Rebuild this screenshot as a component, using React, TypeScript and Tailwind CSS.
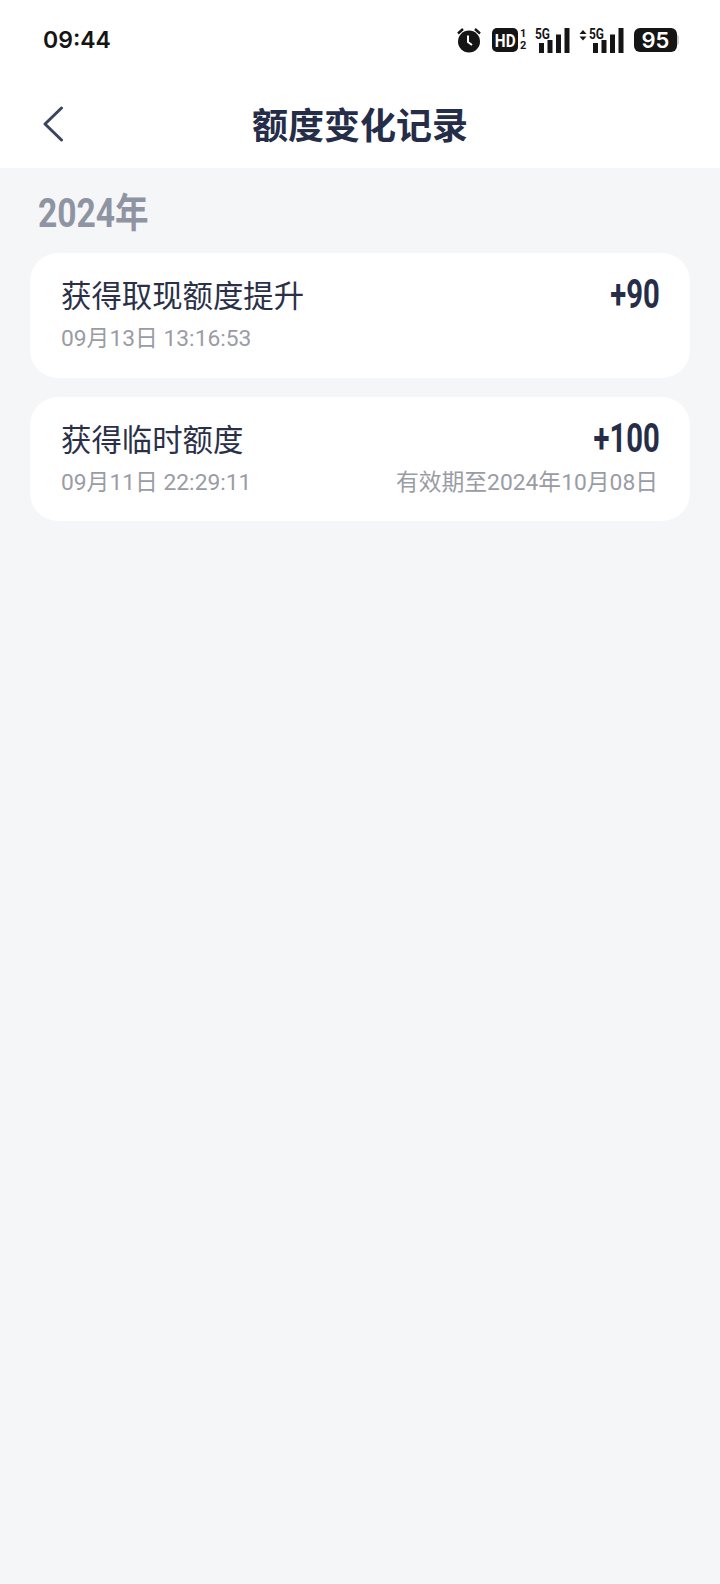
const CJK = 'font-["Roboto","Noto_Sans_CJK_SC",sans-serif]';

const records = [
  { id: 1, title: '获得取现额度提升', time: '09月13日 13:16:53', amount: '+90', note: '' },
  { id: 2, title: '获得临时额度', time: '09月11日 22:29:11', amount: '+100', note: '有效期至2024年10月08日' },
];

function Alarm() {
  return (
    <svg width="24" height="26" viewBox="0 0 24 26" className="shrink-0">
      <circle cx="12" cy="14.5" r="11" fill="#151515" />
      <path d="M11 8.5v6.5l4 3" fill="none" stroke="#fff" strokeWidth="2" />
      <path d="M1 6.5 6 2M23 6.5 18 2" fill="none" stroke="#151515" strokeWidth="2.4" />
    </svg>
  );
}

function Signal({ arrows }: { arrows?: boolean }) {
  return (
    <svg width={arrows ? 45 : 36} height="26" viewBox={arrows ? '0 0 45 26' : '0 0 36 26'} className="shrink-0">
      {arrows && <path d="M0.5 7 4 3 7.5 7ZM0.5 9.5 4 13.5 7.5 9.5Z" fill="#151515" />}
      <g transform={arrows ? 'translate(10 0)' : undefined}>
        <text x="0" y="12" fontFamily="Roboto, sans-serif" fontWeight="700" fontSize="14" fill="#151515" textLength="15" lengthAdjust="spacingAndGlyphs">5G</text>
        <rect x="4" y="16" width="5" height="10" fill="#151515" />
        <rect x="12.5" y="13" width="5" height="13" fill="#151515" />
        <rect x="21" y="7.5" width="5" height="18.5" fill="#151515" />
        <rect x="29.5" y="1" width="5" height="25" fill="#151515" />
      </g>
    </svg>
  );
}

function StatusBar() {
  return (
    <div className="flex h-[80px] items-start justify-between pl-[43px] pr-[41px] pt-[26px]">
      <span className='font-["Inter",sans-serif] text-[23px] leading-[28px] font-semibold text-[#151515]'>09:44</span>
      <div className="flex items-center pt-px">
        <Alarm />
        <span className='ml-[11px] flex h-[24px] w-[26px] items-center justify-center rounded-[5px] bg-[#151515] font-["Roboto",sans-serif] text-white'>
          <span className="scale-x-[0.85] text-[18px] font-bold">HD</span>
        </span>
        <span className='ml-[2px] flex w-[6px] flex-col font-["Roboto",sans-serif] text-[11px] leading-[12px] font-bold text-[#151515]'>
          <span>1</span>
          <span>2</span>
        </span>
        <span className="ml-[9px] flex"><Signal /></span>
        <span className="ml-[8px] flex"><Signal arrows /></span>
        <span className='ml-[10px] flex h-[24px] w-[43px] items-center justify-center rounded-[6px] bg-[#151515] font-["Inter",sans-serif] text-[22px] font-semibold text-white'>95</span>
        <span className="h-[10px] w-[2px] rounded-r-sm bg-[#c8c8c8]" />
      </div>
    </div>
  );
}

export default function App() {
  return (
    <div className={`flex min-h-[1584px] w-[720px] flex-col bg-[#f5f6f8] ${CJK}`}>
      <div className="bg-white">
        <StatusBar />
        <div className="grid h-[88px] grid-cols-[1fr_auto_1fr] items-center">
          <svg width="22" height="36" viewBox="0 0 22 36" className="ml-[42px]" fill="none" stroke="#3b4460" strokeWidth="3" strokeLinecap="round" strokeLinejoin="round">
            <path d="M19.5 2 3 18 19.5 34" />
          </svg>
          <h1 className="pt-[6px] text-[36px] leading-[48px] font-bold text-[#252d48]">额度变化记录</h1>
        </div>
      </div>

      <div className="flex flex-col px-[30px]">
        <h2 className="ml-[8px] h-[85px] w-[200px] origin-left scale-x-[0.84] pt-[20px] text-[40px] leading-[52px] font-bold text-[#8f94a3]">2024年</h2>
        <div className="flex w-[660px] flex-col gap-[19px]">
          {records.map(r => (
            <div key={r.id} className="flex h-[124.5px] flex-col rounded-[28px] bg-white pt-[23px] pr-[30px] pl-[31px]">
              <div className="flex h-[42px] items-center justify-between">
                <span className="text-[30.4px] leading-[42px] text-[#2a3048]">{r.title}</span>
                <span className="-mt-[4px] origin-right scale-x-[0.73] text-[40px] leading-[42px] font-bold text-[#252d48]">{r.amount}</span>
              </div>
              <div className="mt-[4px] flex items-center justify-between text-[22.8px] leading-[34px] text-[#9a9ca5]">
                <span>{r.time}</span>
                {r.note && <span className="mr-[2px]">{r.note}</span>}
              </div>
            </div>
          ))}
        </div>
      </div>
    </div>
  );
}
